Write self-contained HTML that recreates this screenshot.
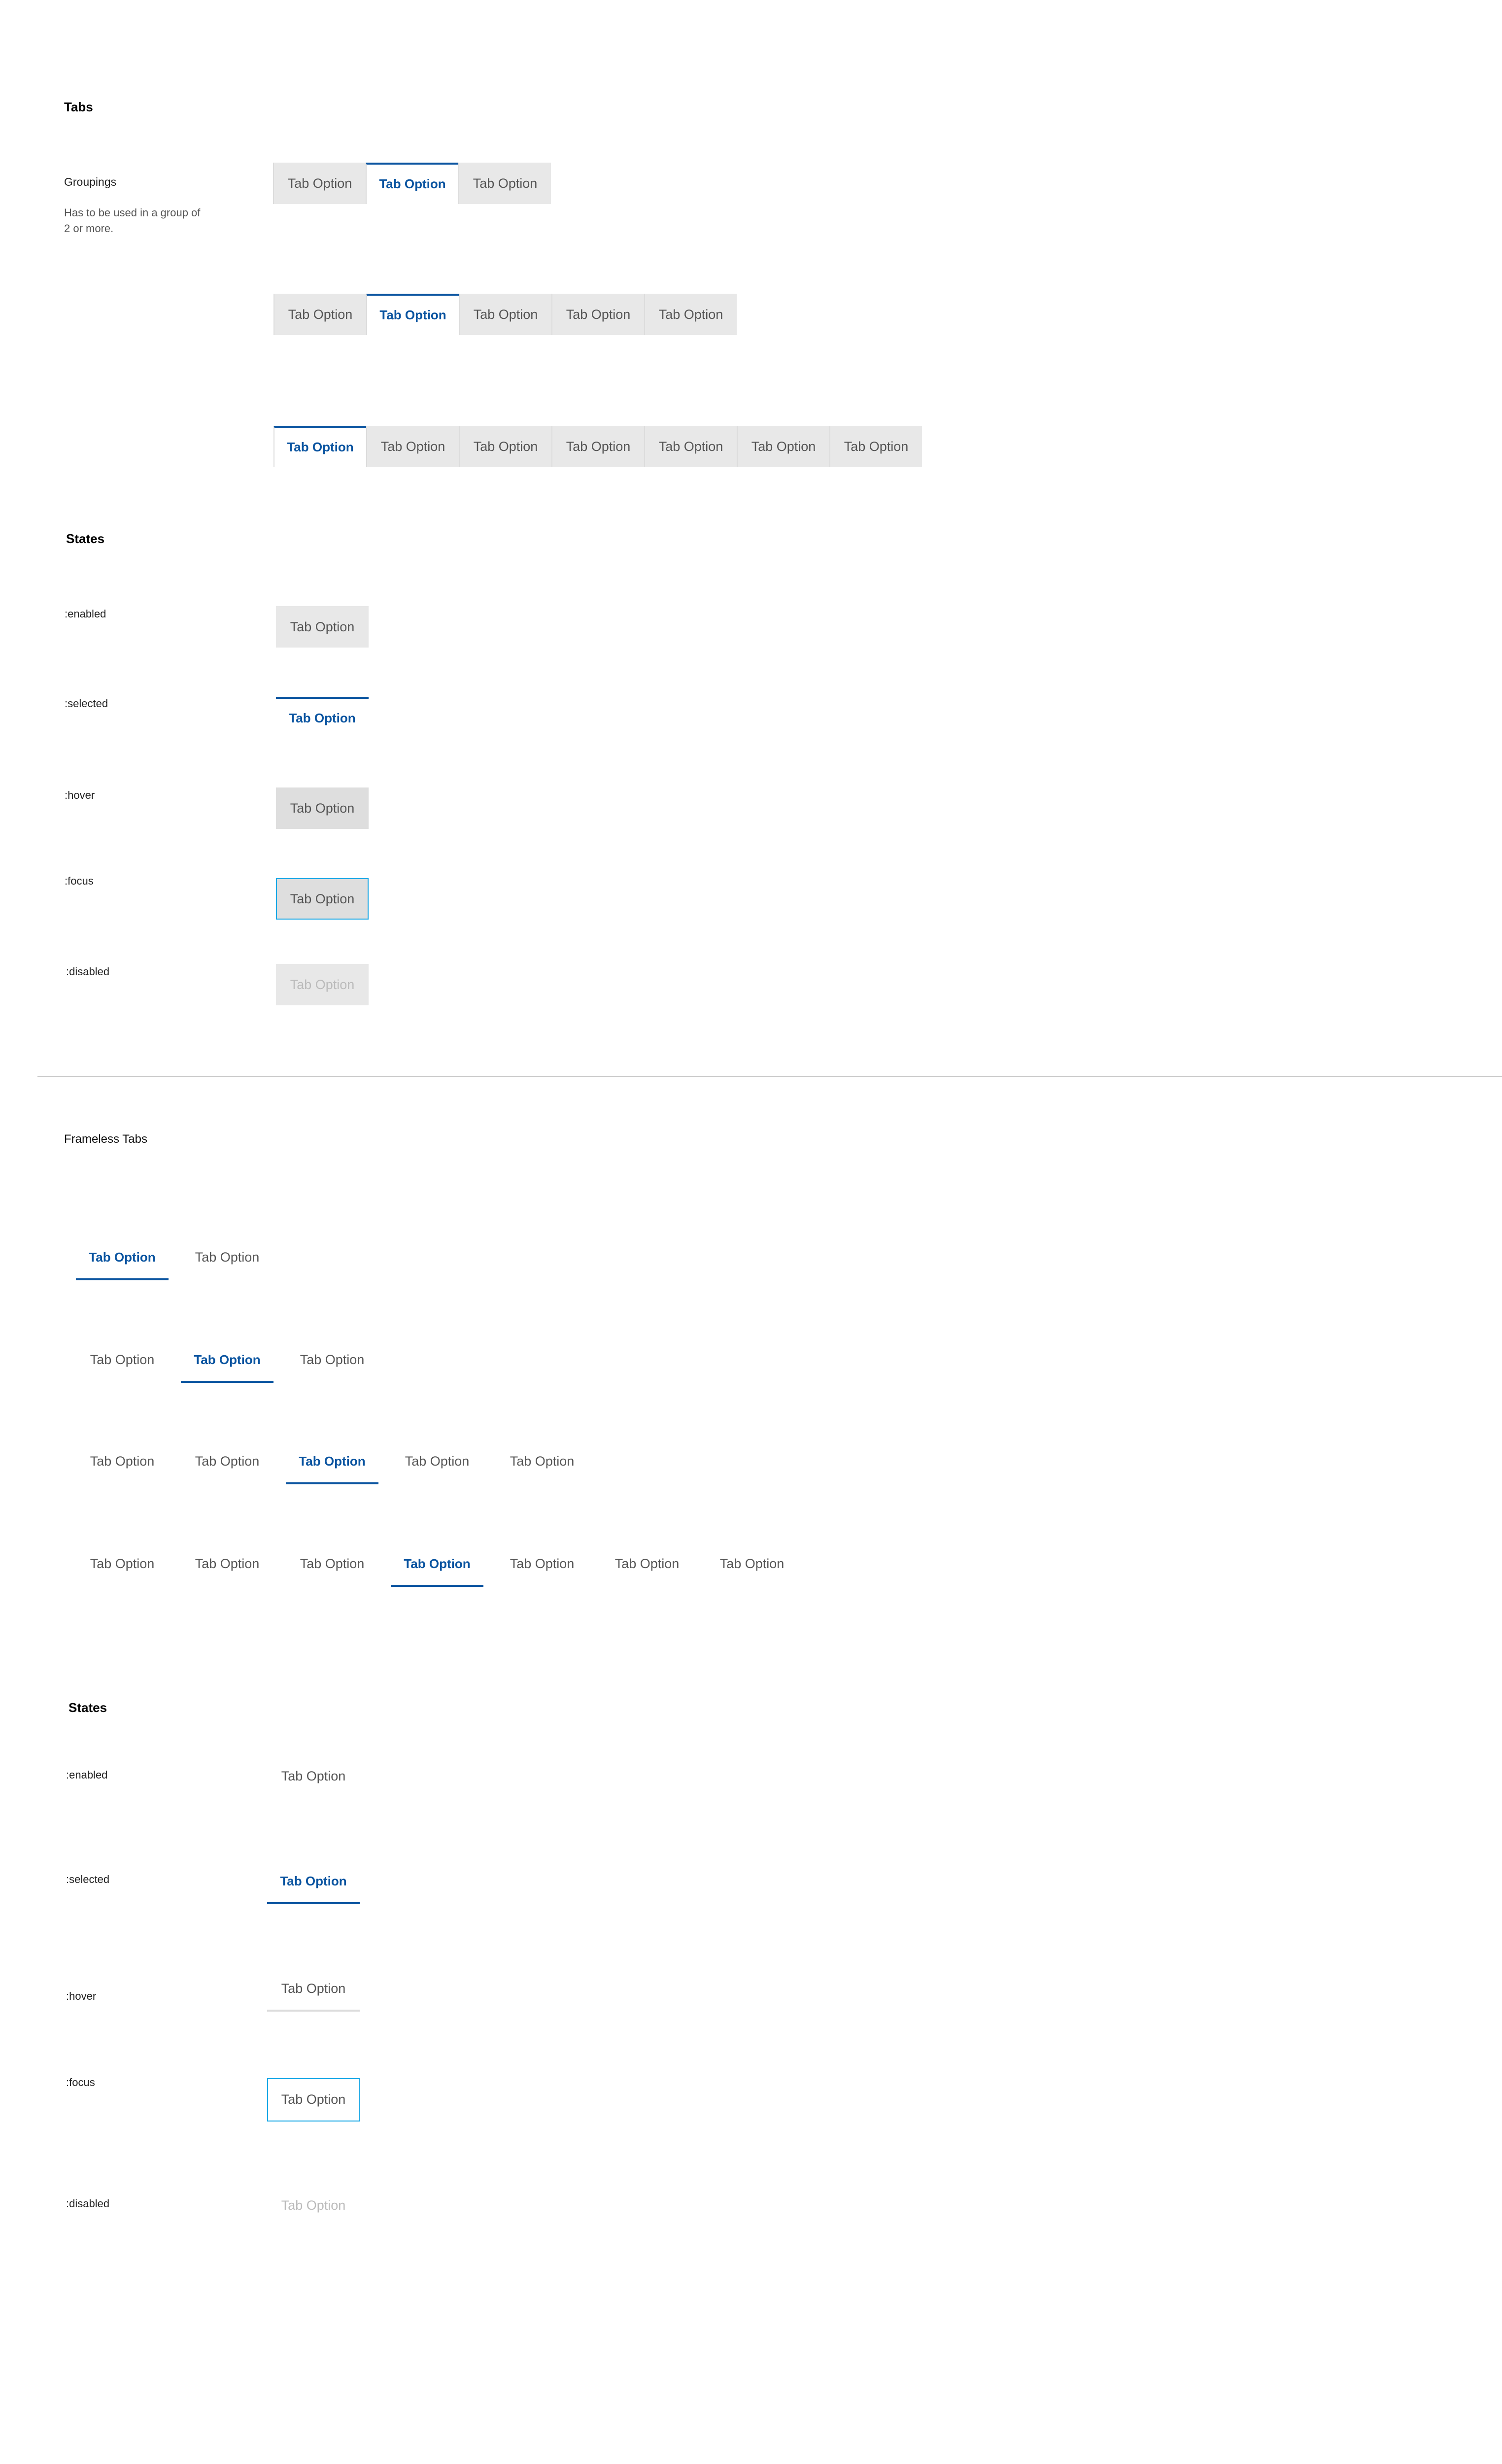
<!DOCTYPE html>
<html><head><meta charset="utf-8"><style>
html{width:3048px;height:5202px;overflow:hidden;}
html,body{margin:0;padding:0;background:#fff;}
body{width:3048px;height:5202px;position:relative;overflow:hidden;font-family:"Liberation Sans",sans-serif;}
.a{position:absolute;white-space:nowrap;}
.h{font-weight:bold;color:#000;font-size:26px;}
.lbl{font-size:22px;color:#222;}
.row{position:absolute;display:flex;height:84px;}
.t{width:188px;height:84px;box-sizing:border-box;background:#e8e8e8;border-left:2px solid #dcdcdc;color:#555;font-size:27px;text-align:center;line-height:84px;}
.t.s{background:#fff;border-top:4px solid #0a54a0;color:#0a54a0;font-weight:bold;line-height:78px;font-size:26px;}
.ft{position:absolute;width:188px;height:90px;box-sizing:border-box;text-align:center;line-height:86px;font-size:27px;color:#555;}
.ft.s{border-bottom:4px solid #0a54a0;color:#0a54a0;font-weight:bold;font-size:26px;}
</style></head><body>
<div class="a h" style="left:130px;top:202px;">Tabs</div>
<div class="a" style="left:130px;top:356px;font-size:23px;color:#222;">Groupings</div>
<div class="a" style="left:130px;top:416px;font-size:22px;color:#555;line-height:32px;white-space:normal;width:320px;">Has to be used in a group of<br>2 or more.</div>

<div class="row" style="left:554px;top:330px;"><div class="t">Tab Option</div><div class="t s">Tab Option</div><div class="t">Tab Option</div></div>
<div class="row" style="left:555px;top:596px;"><div class="t">Tab Option</div><div class="t s">Tab Option</div><div class="t">Tab Option</div><div class="t">Tab Option</div><div class="t">Tab Option</div></div>
<div class="row" style="left:555px;top:864px;"><div class="t s" style="border-left:2px solid #dcdcdc">Tab Option</div><div class="t">Tab Option</div><div class="t">Tab Option</div><div class="t">Tab Option</div><div class="t">Tab Option</div><div class="t">Tab Option</div><div class="t">Tab Option</div></div>

<div class="a h" style="left:134px;top:1078px;">States</div>
<div class="a lbl" style="left:131px;top:1233px;">:enabled</div>
<div class="a lbl" style="left:131px;top:1415px;">:selected</div>
<div class="a lbl" style="left:131px;top:1601px;">:hover</div>
<div class="a lbl" style="left:131px;top:1775px;">:focus</div>
<div class="a lbl" style="left:134px;top:1959px;">:disabled</div>

<div class="a t" style="left:560px;top:1230px;border:none;">Tab Option</div>
<div class="a t s" style="left:560px;top:1414px;border-left:none;">Tab Option</div>
<div class="a t" style="left:560px;top:1598px;border:none;background:#dedede;">Tab Option</div>
<div class="a t" style="left:560px;top:1782px;border:2px solid #1aa8e6;background:#dedede;line-height:80px;">Tab Option</div>
<div class="a t" style="left:560px;top:1956px;border:none;color:#bbb;">Tab Option</div>

<div class="a" style="left:76px;top:2183px;width:2972px;height:3px;background:#c8c8c8;"></div>

<div class="a" style="left:130px;top:2298px;font-size:24px;color:#111;">Frameless Tabs</div>

<div class="ft s" style="left:154px;top:2508px;">Tab Option</div>
<div class="ft" style="left:367px;top:2508px;">Tab Option</div>

<div class="ft" style="left:154px;top:2716px;">Tab Option</div>
<div class="ft s" style="left:367px;top:2716px;">Tab Option</div>
<div class="ft" style="left:580px;top:2716px;">Tab Option</div>

<div class="ft" style="left:154px;top:2922px;">Tab Option</div>
<div class="ft" style="left:367px;top:2922px;">Tab Option</div>
<div class="ft s" style="left:580px;top:2922px;">Tab Option</div>
<div class="ft" style="left:793px;top:2922px;">Tab Option</div>
<div class="ft" style="left:1006px;top:2922px;">Tab Option</div>

<div class="ft" style="left:154px;top:3130px;">Tab Option</div>
<div class="ft" style="left:367px;top:3130px;">Tab Option</div>
<div class="ft" style="left:580px;top:3130px;">Tab Option</div>
<div class="ft s" style="left:793px;top:3130px;">Tab Option</div>
<div class="ft" style="left:1006px;top:3130px;">Tab Option</div>
<div class="ft" style="left:1219px;top:3130px;">Tab Option</div>
<div class="ft" style="left:1432px;top:3130px;">Tab Option</div>

<div class="a h" style="left:139px;top:3450px;">States</div>
<div class="a lbl" style="left:134px;top:3589px;">:enabled</div>
<div class="a lbl" style="left:134px;top:3801px;">:selected</div>
<div class="a lbl" style="left:134px;top:4038px;">:hover</div>
<div class="a lbl" style="left:134px;top:4213px;">:focus</div>
<div class="a lbl" style="left:134px;top:4459px;">:disabled</div>

<div class="ft" style="left:542px;top:3561px;">Tab Option</div>
<div class="ft s" style="left:542px;top:3774px;">Tab Option</div>
<div class="ft" style="left:542px;top:3992px;border-bottom:4px solid #dcdcdc;">Tab Option</div>
<div class="ft" style="left:542px;top:4217px;height:88px;border:2px solid #1aa8e6;line-height:82px;">Tab Option</div>
<div class="ft" style="left:542px;top:4432px;color:#bbb;">Tab Option</div>
</body></html>
